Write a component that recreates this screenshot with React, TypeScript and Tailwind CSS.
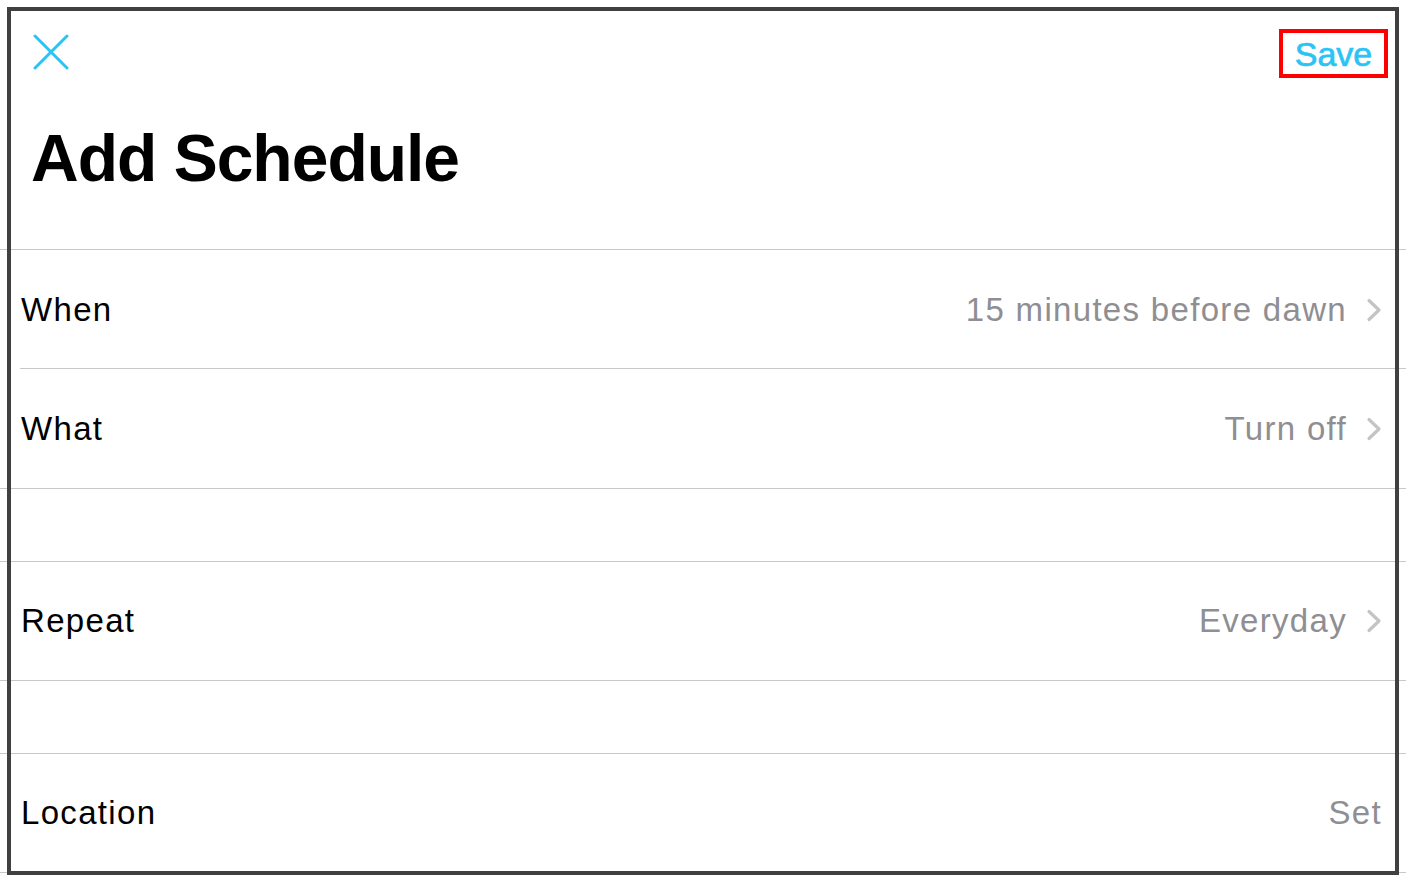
import React from "react";

type Row = {
  label: string;
  value: string;
  chevron?: boolean;
  inset?: boolean;
  tall?: boolean;
};

function Chevron() {
  return (
    <svg width="16" height="24" viewBox="0 0 16 24" className="ml-[19px]">
      <polyline
        points="3,2.5 13,12 3,21.5"
        fill="none"
        stroke="#c4c4c8"
        strokeWidth="3.2"
        strokeLinecap="round"
        strokeLinejoin="round"
      />
    </svg>
  );
}

function CloseIcon() {
  return (
    <svg width="36" height="36" viewBox="0 0 36 36">
      <path
        d="M2 2 L34 34 M34 2 L2 34"
        stroke="#2ac4f4"
        strokeWidth="3"
        strokeLinecap="round"
      />
    </svg>
  );
}

function SettingRow({ label, value, chevron = true, inset, tall }: Row) {
  const height = tall ? "h-[120px]" : "h-[119px]";
  return (
    <div
      className={
        inset
          ? `relative ${height} flex items-center pl-[21px] pr-[24px]`
          : `${height} flex items-center pl-[21px] pr-[24px] border-b border-[#c8c8cc]`
      }
    >
      <span className="text-[33px] tracking-[0.04em] text-black">{label}</span>
      <div className="ml-auto flex items-center">
        <span className="text-[33px] tracking-[0.04em] text-[#8e8e93]">{value}</span>
        {chevron && <Chevron />}
      </div>
      {inset && (
        <div className="absolute left-[20px] right-0 bottom-0 h-px bg-[#c8c8cc]" />
      )}
    </div>
  );
}

function Spacer() {
  return <div className="h-[73px] border-b border-[#c8c8cc]" />;
}

export default function App() {
  return (
    <div
      className="relative w-[1406px] h-[885px] bg-white overflow-hidden"
      style={{ fontFamily: '"Liberation Sans", Arial, sans-serif' }}
    >
      {/* nav bar */}
      <div className="flex items-start justify-between pt-[34px] pl-[33px] pr-[18px]">
        <CloseIcon />
        <span className="-mt-[5px] border-4 border-[#ff0000] w-[109px] h-[49px] flex items-center justify-center text-[34px] text-[#2ac4f4] leading-none [-webkit-text-stroke:0.7px_#2ac4f4]">
          Save
        </span>
      </div>

      {/* large title */}
      <div className="h-[172px] border-b border-[#c8c8cc] pl-[31px] pt-[47px]">
        <h1 className="text-[66px] font-bold tracking-[-1px] leading-none text-black">
          Add Schedule
        </h1>
      </div>

      <SettingRow label="When" value="15 minutes before dawn" inset />
      <SettingRow label="What" value="Turn off" tall />
      <Spacer />
      <SettingRow label="Repeat" value="Everyday" />
      <Spacer />
      <SettingRow label="Location" value="Set" chevron={false} />

      {/* frame */}
      <div className="pointer-events-none absolute left-[7px] top-[7px] w-[1392px] h-[868px] border-4 border-[#404040]" />
    </div>
  );
}
